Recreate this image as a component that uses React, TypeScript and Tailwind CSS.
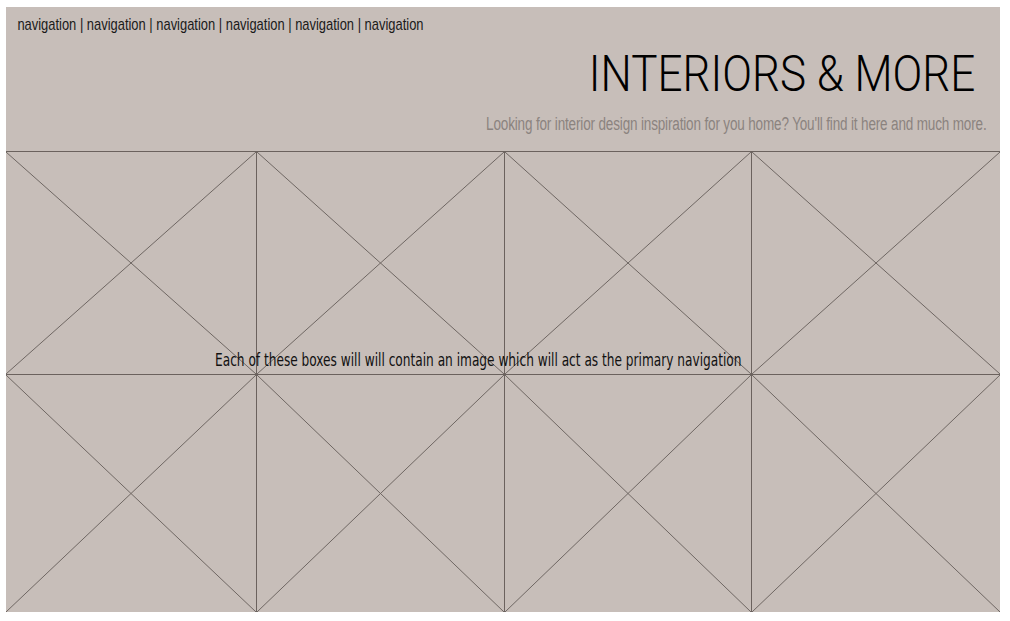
const navItems = ["navigation", "navigation", "navigation", "navigation", "navigation", "navigation"];

function Placeholder({ className }: { className?: string }) {
  return (
    <div className={`relative ${className ?? ""}`}>
      <svg className="absolute inset-0 h-full w-full" viewBox="0 0 100 100" preserveAspectRatio="none">
        <line x1="0" y1="0" x2="100" y2="100" stroke="#6f6763" strokeWidth="1" vectorEffect="non-scaling-stroke" />
        <line x1="100" y1="0" x2="0" y2="100" stroke="#6f6763" strokeWidth="1" vectorEffect="non-scaling-stroke" />
      </svg>
    </div>
  );
}

export default function App() {
  return (
    <div className="h-[621px] w-[1010px] bg-white pl-[6px] pt-[7px]">
      <div className="flex h-[605px] w-[994px] flex-col bg-[#c7beb9]">
        <header className="flex h-[144px] flex-col">
          <nav className="origin-left scale-x-[0.76] whitespace-nowrap pl-[15px] pt-[8px] font-['Liberation_Sans',sans-serif] text-[17px] leading-[20px] text-[#1a1a1a]">
            {navItems.join(" | ")}
          </nav>
          <h1 className="mt-[12px] origin-right scale-x-[0.88] whitespace-nowrap pr-[28px] text-right font-['Roboto',sans-serif] text-[50px] font-light leading-[54px] text-black">
            INTERIORS &amp; MORE
          </h1>
          <p className="mt-[13px] origin-right scale-x-[0.75] whitespace-nowrap pr-[18px] text-right font-['Liberation_Sans',sans-serif] text-[18px] leading-[20px] tracking-[-0.2px] text-[#8b837f]">
            Looking for interior design inspiration for you home? You'll find it here and much more.
          </p>
        </header>
        <div className="relative flex-1 border-t border-[#6b625e]">
          <div className="grid h-full grid-cols-[251px_248px_247px_248px] grid-rows-[223px_1fr]">
            <Placeholder className="border-r border-b border-[#6b625e]" />
            <Placeholder className="border-r border-b border-[#6b625e]" />
            <Placeholder className="border-r border-b border-[#6b625e]" />
            <Placeholder className="border-b border-[#6b625e]" />
            <Placeholder className="border-r border-[#6b625e]" />
            <Placeholder className="border-r border-[#6b625e]" />
            <Placeholder className="border-r border-[#6b625e]" />
            <Placeholder />
          </div>
          <p className="absolute left-[209px] top-[198px] origin-left scale-x-[0.795] whitespace-nowrap font-['DejaVu_Sans_Condensed','DejaVu_Sans',sans-serif] text-[17px] leading-[20px] text-[#111]">
            Each of these boxes will will contain an image which will act as the primary navigation
          </p>
        </div>
      </div>
    </div>
  );
}
